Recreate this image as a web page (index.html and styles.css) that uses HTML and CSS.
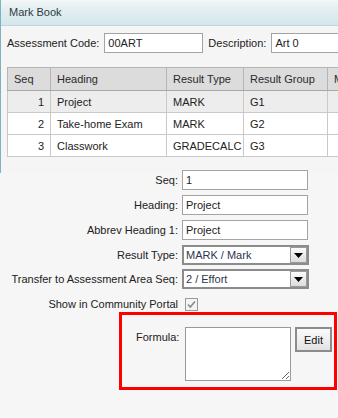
FILE: index.html
```html
<!DOCTYPE html>
<html>
<head>
<meta charset="utf-8">
<link rel="stylesheet" href="styles.css">
</head>
<body>
<div class="panel">
  <div class="titlebar">Mark Book</div>
  <div class="codes">
    <label class="lbl">Assessment Code:</label>
    <input class="txt code" type="text" value="00ART">
    <label class="lbl desc-lbl">Description:</label>
    <input class="txt desc" type="text" value="Art 0">
  </div>
  <table class="grid">
    <colgroup>
      <col class="c-seq"><col class="c-head"><col class="c-type"><col class="c-group"><col class="c-more">
    </colgroup>
    <thead>
      <tr><th>Seq</th><th>Heading</th><th>Result Type</th><th>Result Group</th><th>M</th></tr>
    </thead>
    <tbody>
      <tr class="sel"><td class="num">1</td><td>Project</td><td>MARK</td><td>G1</td><td></td></tr>
      <tr><td class="num">2</td><td>Take-home Exam</td><td>MARK</td><td>G2</td><td></td></tr>
      <tr><td class="num">3</td><td>Classwork</td><td>GRADECALC</td><td>G3</td><td></td></tr>
    </tbody>
  </table>
</div>

<div class="form">
  <div class="row"><label class="flbl">Seq:</label><input class="txt field" type="text" value="1"></div>
  <div class="row"><label class="flbl">Heading:</label><input class="txt field" type="text" value="Project"></div>
  <div class="row"><label class="flbl">Abbrev Heading 1:</label><input class="txt field" type="text" value="Project"></div>
  <div class="row sel-row"><label class="flbl">Result Type:</label>
    <div class="dd"><span class="dd-text">MARK / Mark</span><span class="dd-btn"><svg width="9" height="5" viewBox="0 0 9 5"><path d="M0 0H9L4.5 5Z" fill="#000"/></svg></span></div>
  </div>
  <div class="row sel-row"><label class="flbl">Transfer to Assessment Area Seq:</label>
    <div class="dd"><span class="dd-text">2 / Effort</span><span class="dd-btn"><svg width="9" height="5" viewBox="0 0 9 5"><path d="M0 0H9L4.5 5Z" fill="#000"/></svg></span></div>
  </div>
  <div class="row chk-row"><label class="flbl">Show in Community Portal</label>
    <span class="chk"><svg width="11" height="11" viewBox="0 0 11 11"><path d="M2 5.5L4.3 8L9 2.5" fill="none" stroke="#8a8a8a" stroke-width="1.6"/></svg></span>
  </div>
  <div class="formula-box">
    <label class="flbl formula-lbl">Formula:</label>
    <textarea class="formula"></textarea>
    <button class="edit" type="button">Edit</button>
  </div>
</div>
</body>
</html>
```

FILE: styles.css
```css
html, body {
  margin: 0;
  padding: 0;
}
body {
  width: 338px;
  height: 418px;
  overflow: hidden;
  background: #f6f6f6;
  font-family: "Liberation Sans", Arial, sans-serif;
  font-size: 11px;
  color: #222;
}
.panel {
  width: 420px;
  height: 173px;
  border-left: 1px solid #7fb2bf;
  box-sizing: border-box;
  background: #f5f5f5;
}
.titlebar {
  height: 25px;
  line-height: 25px;
  padding-left: 8px;
  color: #2f3a44;
  background: linear-gradient(#f3f7f8 0%, #e6f0f2 30%, #d3e7eb 100%);
  border-bottom: 1px solid #c3d5da;
}
.codes {
  display: flex;
  align-items: center;
  margin-top: 7px;
  padding-left: 6px;
  height: 20px;
}
.lbl {
  margin-right: 5px;
}
.desc-lbl {
  margin-left: 5px;
}
.txt {
  box-sizing: border-box;
  height: 20px;
  border: 1px solid #a3a3a3;
  background: #fff;
  font-family: inherit;
  font-size: 11px;
  color: #222;
  padding: 0 3px;
  margin: 0;
  outline: none;
}
.code { width: 99px; }
.desc { width: 100px; }
.grid {
  margin: 14px 0 0 6px;
  border-collapse: collapse;
  table-layout: fixed;
  width: 430px;
  border: 1px solid #9c9c9c;
}
.c-seq { width: 43px; }
.c-head { width: 116px; }
.c-type { width: 77px; }
.c-group { width: 84px; }
.c-more { width: 110px; }
.grid th, .grid td {
  height: 21px;
  padding: 0 6px;
  text-align: left;
  font-weight: normal;
  border: 1px solid #c9c9c9;
  white-space: nowrap;
  overflow: hidden;
}
.grid th {
  height: 22px;
  background: #dcdcdc;
  color: #2a2a2a;
  border-color: #b5b5b5;
  border-bottom-color: #a8a8a8;
}
.grid td { background: #fff; }
.grid tr.sel td { background: #ededed; }
.grid td.num { text-align: right; }

.form {
  margin-top: -3px;
  display: flex;
  flex-direction: column;
}
.row {
  display: flex;
  align-items: center;
  height: 20px;
  margin-bottom: 5px;
}
.sel-row { margin-bottom: 4px; }
.chk-row { height: 16px; margin-top: 3px; margin-bottom: 0; }
.flbl {
  width: 182px;
  text-align: right;
  padding-right: 4px;
  box-sizing: border-box;
  flex: none;
}
.field { width: 126px; }
.dd {
  box-sizing: border-box;
  width: 127px;
  height: 20px;
  border: 2px solid #8c8c8c;
  background: #fff;
  display: flex;
  align-items: center;
  justify-content: space-between;
}
.dd-text {
  padding-left: 2px;
  color: #2e3550;
}
.dd-btn {
  box-sizing: border-box;
  width: 17px;
  height: 16px;
  border: 1px solid #9a9a9a;
  background: linear-gradient(#fbfbfb, #dcdcdc);
  display: flex;
  align-items: center;
  justify-content: center;
}
.chk {
  box-sizing: border-box;
  width: 13px;
  height: 13px;
  border: 1px solid #9a9a9a;
  background: #f4f4f4;
  margin-left: 3px;
  display: flex;
  align-items: center;
  justify-content: center;
}
.formula-box {
  box-sizing: border-box;
  margin-left: 119px;
  margin-top: 0;
  width: 218px;
  height: 78px;
  border: 3px solid #ff0000;
  display: flex;
  align-items: flex-start;
  padding-top: 12px;
}
.formula-lbl {
  width: 63px;
  padding-top: 4px;
  padding-right: 0;
  text-align: left;
  padding-left: 14px;
}
.formula {
  box-sizing: border-box;
  width: 106px;
  height: 54px;
  margin: 0 4px 0 0;
  border: 1px solid #999;
  background: #fff;
  font-family: inherit;
  font-size: 11px;
  outline: none;
}
.edit {
  box-sizing: border-box;
  width: 37px;
  height: 25px;
  margin: 0;
  padding: 0;
  border: 2px solid #8c8c8c;
  background: linear-gradient(#fafafa 0%, #f0f0f0 45%, #e2e2e2 100%);
  font-family: inherit;
  font-size: 11px;
  color: #111;
}
```
